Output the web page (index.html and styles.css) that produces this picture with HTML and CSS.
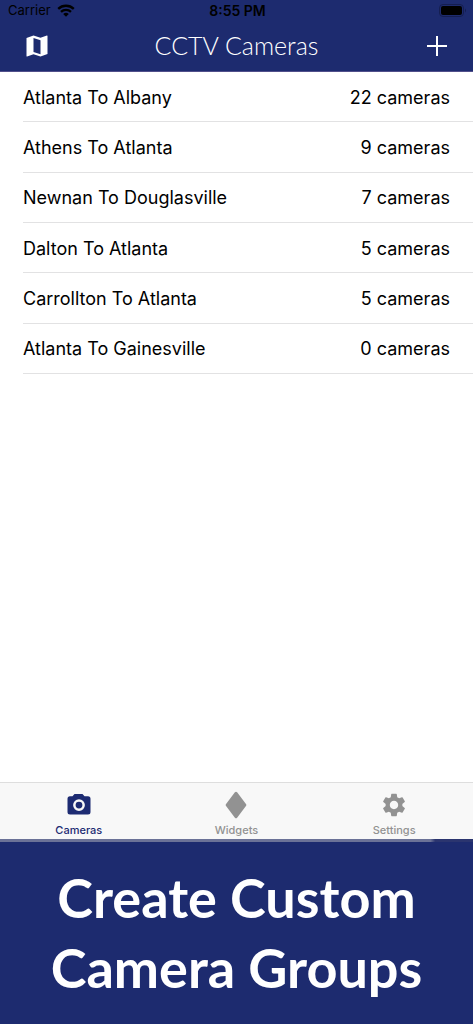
FILE: index.html
```html
<!DOCTYPE html>
<html lang="en">
<head>
<meta charset="utf-8">
<meta name="viewport" content="width=device-width, initial-scale=1">
<title>CCTV Cameras</title>
<link rel="stylesheet" href="styles.css">
</head>
<body>
<div class="app">
  <header class="header">
    <div class="status">
      <div class="carrier">
        <span>Carrier</span>
        <svg class="wifi" viewBox="0 0 18 13" aria-hidden="true">
          <path d="M1.2 4.9a11.2 11.2 0 0 1 15.6 0M4 7.9a7.2 7.2 0 0 1 10 0" fill="none" stroke="currentColor" stroke-width="2.3"/>
          <path d="M9 12.8 6.2 10a4 4 0 0 1 5.6 0z" fill="currentColor"/>
        </svg>
      </div>
      <time class="clock">8:55 PM</time>
      <svg class="battery" viewBox="0 0 28 13" aria-hidden="true">
        <rect x="0.5" y="0.5" width="24" height="12" rx="3.5" fill="none" stroke="#151e50"/>
        <rect x="2" y="2" width="21" height="9" rx="2" fill="#000"/>
        <path d="M26 4.5q2 2 0 4z" fill="#151e50"/>
      </svg>
    </div>
    <nav class="navbar">
      <button class="icon-button" type="button" aria-label="Map">
        <svg class="map-icon" viewBox="0 0 22 22" aria-hidden="true">
          <path fill="#fff" fill-rule="evenodd" d="M.5 3 7.5.5l7 2.300L20.900.4q.6-.1.6.5V19l-7 2.500-7-2.300-6.400 2.400q-.6.1-.6-.5zM7.500 3v14l7 2.300V5.300z"/>
        </svg>
      </button>
      <h1 class="title">CCTV Cameras</h1>
      <button class="icon-button icon-button-end" type="button" aria-label="Add group">
        <svg class="plus-icon" viewBox="0 0 20 20" aria-hidden="true">
          <path d="M10 0v20M0 10h20" stroke="#fff" stroke-width="2"/>
        </svg>
      </button>
    </nav>
  </header>
  <main class="content">
    <ul class="groups">
      <li class="group"><span>Atlanta To Albany</span><span>22 cameras</span></li>
      <li class="group"><span>Athens To Atlanta</span><span>9 cameras</span></li>
      <li class="group"><span>Newnan To Douglasville</span><span>7 cameras</span></li>
      <li class="group"><span>Dalton To Atlanta</span><span>5 cameras</span></li>
      <li class="group"><span>Carrollton To Atlanta</span><span>5 cameras</span></li>
      <li class="group"><span>Atlanta To Gainesville</span><span>0 cameras</span></li>
    </ul>
  </main>
  <nav class="tabs">
    <button class="tab tab-active" type="button">
      <svg class="tab-icon" viewBox="0 0 28 28" aria-hidden="true">
        <path fill="currentColor" fill-rule="evenodd" d="M9.500 3h8l2 2.300H23q2.500 0 2.500 2.500v13.200q0 2.500-2.500 2.500H5q-2.500 0-2.500-2.500V7.800q0-2.500 2.500-2.500h2.500zM14 8.200a5.900 5.900 0 1 0 0 11.800a5.900 5.900 0 1 0 0-11.800zM14 10.700a3.400 3.400 0 1 1 0 6.800a3.400 3.400 0 1 1 0-6.800z"/>
      </svg>
      <span>Cameras</span>
    </button>
    <button class="tab" type="button">
      <svg class="tab-icon" viewBox="0 0 28 28" aria-hidden="true">
        <path fill="currentColor" d="M12.900 1.200q1.100-1 2.200 0l9 12q.5.8 0 1.600l-9 12q-1.100 1-2.200 0l-9-12q-.5-.8 0-1.600z"/>
      </svg>
      <span>Widgets</span>
    </button>
    <button class="tab" type="button">
      <svg class="tab-icon" viewBox="0 0 24 24" aria-hidden="true">
        <path fill="currentColor" d="M19.140 12.940c.04-.3.060-.61.060-.94 0-.32-.02-.64-.07-.94l2.030-1.580c.18-.14.230-.41.120-.61l-1.920-3.320c-.12-.22-.37-.29-.59-.22l-2.390.96c-.5-.38-1.030-.7-1.620-.94L14.400 2.810c-.04-.24-.24-.41-.48-.41h-3.840c-.24 0-.43.17-.47.41L9.250 5.350c-.59.24-1.130.57-1.620.94L5.240 5.330c-.22-.08-.47 0-.59.22L2.740 8.870c-.12.21-.08.470.12.610l2.030 1.580c-.05.3-.09.63-.09.94s.02.640.070.940l-2.030 1.580c-.18.14-.23.41-.12.61l1.920 3.320c.12.22.37.29.59.22l2.390-.96c.5.38 1.030.7 1.620.94l.36 2.540c.05.24.24.41.48.41h3.840c.24 0 .44-.17.47-.41l.36-2.540c.59-.24 1.130-.56 1.620-.94l2.390.96c.22.080.47 0 .59-.22l1.920-3.320c.12-.22.070-.47-.12-.61zM12 15.600c-1.980 0-3.600-1.620-3.600-3.600s1.620-3.600 3.600-3.600 3.600 1.620 3.600 3.600-1.620 3.600-3.600 3.600z"/>
      </svg>
      <span>Settings</span>
    </button>
  </nav>
  <footer class="banner">
    <p class="caption">Create Custom<br>Camera Groups</p>
  </footer>
</div>
</body>
</html>
```
FILE: styles.css
```css
* {
  box-sizing: border-box;
}

body {
  margin: 0;
  background: #fff;
  color: #000;
  font-family: Inter, "Liberation Sans", sans-serif;
}

button {
  padding: 0;
  border: 0;
  background: none;
  font: inherit;
  cursor: pointer;
}

svg {
  display: block;
}

.app {
  display: flex;
  flex-direction: column;
  min-height: 100vh;
}

.header {
  background: #1d2b6f;
  border-bottom: 1px solid #514f8b;
}

.status {
  display: grid;
  grid-template-columns: 1fr auto 1fr;
  align-items: center;
  height: 20px;
  padding: 0 6px 0 8px;
  font-size: 13px;
}

.carrier {
  display: flex;
  align-items: center;
  gap: 6px;
}

.wifi {
  width: 18px;
  height: 13px;
}

.clock {
  font-size: 14px;
  font-weight: 600;
}

.battery {
  width: 28px;
  height: 13px;
  justify-self: end;
}

.navbar {
  display: grid;
  grid-template-columns: 1fr auto 1fr;
  align-items: center;
  height: 51px;
  padding: 0 26px;
}

.icon-button {
  justify-self: start;
}

.icon-button-end {
  justify-self: end;
}

.map-icon {
  width: 22px;
  height: 22px;
}

.plus-icon {
  width: 20px;
  height: 20px;
}

.title {
  margin: 0;
  padding-bottom: 2px;
  color: #fff;
  font-family: Lato, sans-serif;
  font-size: 25px;
  font-weight: 300;
  line-height: 32px;
}

.content {
  flex: 1;
}

.groups {
  display: grid;
  grid-auto-rows: 1fr;
  min-height: 302px;
  margin: 0;
  padding: 0 0 0 23px;
  list-style: none;
}

.group {
  display: flex;
  justify-content: space-between;
  align-items: center;
  padding: 2px 23px 0 0;
  border-bottom: 1px solid #e2e2e3;
  font-size: 18px;
  line-height: 24px;
}

.tabs {
  display: grid;
  grid-template-columns: repeat(3, 1fr);
  padding: 8px 0 1px;
  border-top: 1px solid #dedede;
  background: #f8f8f8;
}

.tab {
  display: flex;
  flex-direction: column;
  align-items: center;
  gap: 3px;
  color: #929292;
  font-size: 11px;
  font-weight: 500;
  line-height: 16px;
}

.tab-active {
  color: #1d2b72;
}

.tab-icon {
  width: 28px;
  height: 28px;
}

.banner {
  padding: 24px 16px 21px;
  background:
    linear-gradient(to right, #6b7297 91%, #2b356f 92%) top / 100% 3px no-repeat,
    #1d2b6f;
}

.caption {
  margin: 0;
  color: #fff;
  font-family: Lato, sans-serif;
  font-size: 54px;
  font-weight: 700;
  line-height: 70px;
  text-align: center;
}
```
